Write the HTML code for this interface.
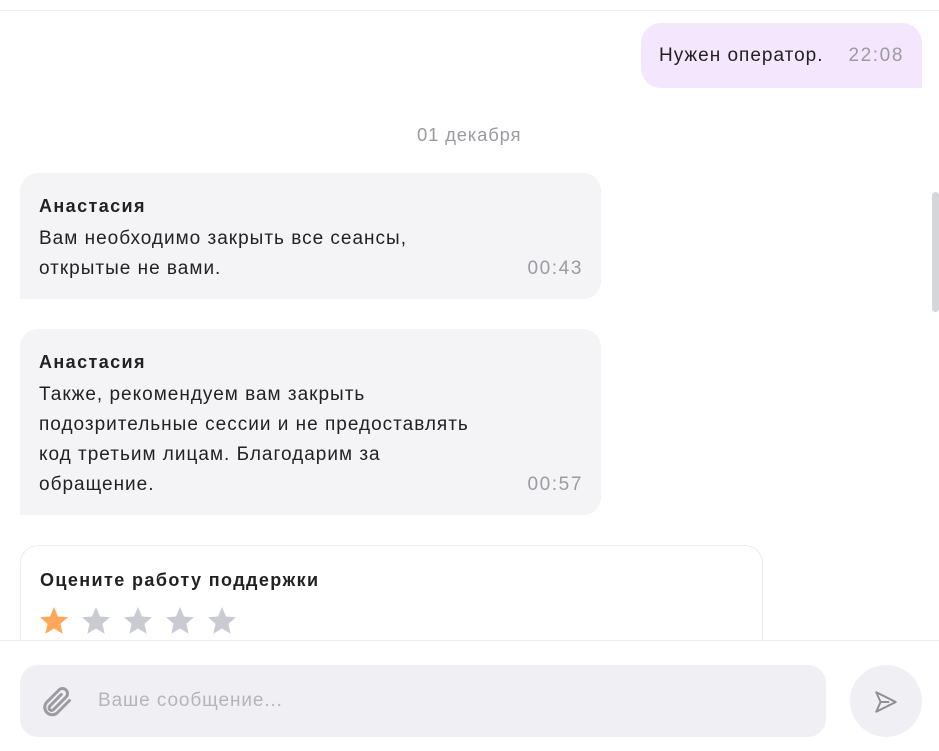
<!DOCTYPE html>
<html><head><meta charset="utf-8"><style>
*{margin:0;padding:0;box-sizing:border-box}
body{width:939px;height:751px;overflow:hidden;background:#fff;font-family:"Liberation Sans","Noto Sans CJK SC",sans-serif;color:#222;position:relative}
.a{position:absolute}
.topline{left:0;top:10px;width:939px;height:1px;background:#ebebf0}
.me{left:641px;top:23px;width:281px;height:65px;background:#f4e6fd;border-radius:20px 20px 0 20px}
.t{font-size:19px;letter-spacing:1px}
.time{color:#9b9ba1;font-size:19px;letter-spacing:1.6px;text-align:right}
.bub{left:20px;background:#f4f4f6;border-radius:18px 18px 18px 0}
.name{font-weight:bold;font-size:18px;letter-spacing:1.4px}
.card{left:20px;top:545px;width:743px;height:120px;border:1px solid #ebebf0;border-radius:18px;background:#fff}
.bottom{left:0;top:640px;width:939px;height:111px;background:#fff;border-top:1px solid #ebebf0}
.input{left:20px;top:665px;width:806px;height:72px;background:#f0f0f4;border-radius:18px}
.send{left:850px;top:665px;width:72px;height:72px;background:#f0f0f4;border-radius:50%}
</style></head><body>
<div class="a topline"></div>
<div class="a me"></div>
<div class="a t" style="left:659px;top:45px">Нужен оператор.</div>
<div class="a time" style="right:35px;top:45px">22:08</div>
<div class="a" style="left:932px;top:192px;width:7px;height:120px;background:#d5d5dc;border-radius:4px"></div>
<div class="a" style="left:417px;top:124px;font-size:18.5px;letter-spacing:0.8px;color:#9b9ba1">01 декабря</div>

<div class="a bub" style="top:173px;width:581px;height:126px"></div>
<div class="a name" style="left:39px;top:196px">Анастасия</div>
<div class="a t" style="left:39px;top:224px;line-height:30px">Вам необходимо закрыть все сеансы,<br>открытые не вами.</div>
<div class="a time" style="right:356px;top:254px;line-height:30px">00:43</div>

<div class="a bub" style="top:329px;width:581px;height:186px"></div>
<div class="a name" style="left:39px;top:352px">Анастасия</div>
<div class="a t" style="left:39px;top:380px;line-height:30px">Также, рекомендуем вам закрыть<br>подозрительные сессии и не предоставлять<br>код третьим лицам. Благодарим за<br>обращение.</div>
<div class="a time" style="right:356px;top:470px;line-height:30px">00:57</div>

<div class="a card"></div>
<div class="a name" style="left:40px;top:570px">Оцените работу поддержки</div>
<svg class="a" style="left:38px;top:605px" width="204" height="32" viewBox="0 0 204 32">
<g>
<path d="M16 2l4 9.5 10 .8-7.6 6.6 2.3 9.8L16 23.5 7.3 28.7l2.3-9.8L2 12.3l10-.8z" fill="#ffa75a"/>
<path transform="translate(42 0)" d="M16 2l4 9.5 10 .8-7.6 6.6 2.3 9.8L16 23.5 7.3 28.7l2.3-9.8L2 12.3l10-.8z" fill="#cacad2"/>
<path transform="translate(84 0)" d="M16 2l4 9.5 10 .8-7.6 6.6 2.3 9.8L16 23.5 7.3 28.7l2.3-9.8L2 12.3l10-.8z" fill="#cacad2"/>
<path transform="translate(126 0)" d="M16 2l4 9.5 10 .8-7.6 6.6 2.3 9.8L16 23.5 7.3 28.7l2.3-9.8L2 12.3l10-.8z" fill="#cacad2"/>
<path transform="translate(168 0)" d="M16 2l4 9.5 10 .8-7.6 6.6 2.3 9.8L16 23.5 7.3 28.7l2.3-9.8L2 12.3l10-.8z" fill="#cacad2"/>
</g></svg>

<div class="a bottom"></div>
<div class="a input"></div>
<svg class="a" style="left:38px;top:684px" width="36" height="36" viewBox="0 0 24 24" fill="none" stroke="#9b9ba1" stroke-width="2" stroke-linecap="round"><path d="M21 11l-8.5 8.5a5 5 0 0 1-7-7L14 4a3.3 3.3 0 0 1 4.7 4.7L10.2 17.2a1.7 1.7 0 0 1-2.4-2.4L15.5 7"/></svg>
<div class="a" style="left:98px;top:690px;font-size:19px;letter-spacing:0.9px;color:#b4b4ba">Ваше сообщение...</div>
<div class="a send"></div>
<svg class="a" style="left:873px;top:689px" width="26" height="26" viewBox="0 0 24 24" fill="none" stroke="#8e8e94" stroke-width="1.8" stroke-linejoin="round"><path d="M3 3l18 9-18 9 4-9z"/><path d="M7 12h8"/></svg>
</body></html>
